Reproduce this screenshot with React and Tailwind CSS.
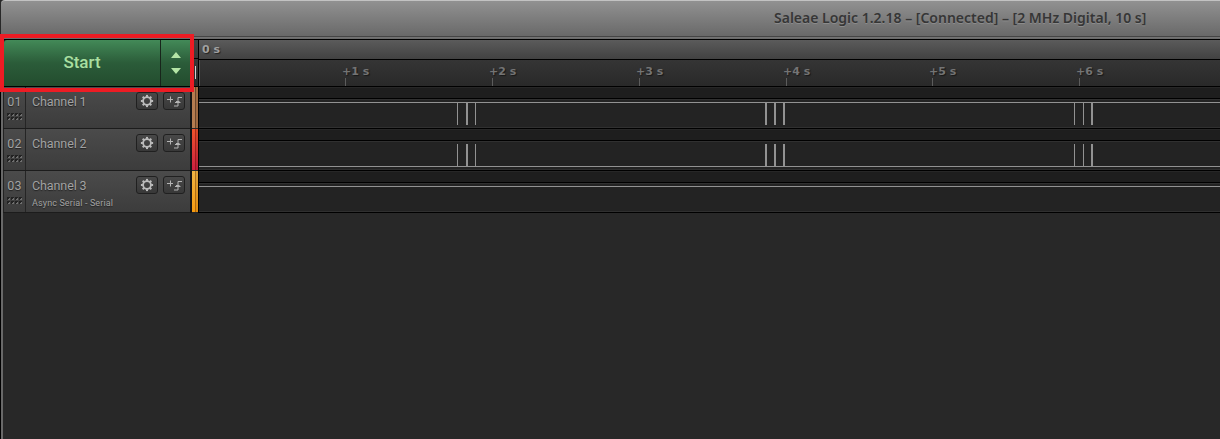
import React from 'react';

const CHANNELS = [
  { id: '01', name: 'Channel 1', stripe: 'bg-[linear-gradient(90deg,#b57c50_0_3px,#6b472c_3px_4px,#a06b42_4px)]', high: true, pulses: true },
  { id: '02', name: 'Channel 2', stripe: 'bg-[linear-gradient(90deg,transparent_3px,rgba(90,0,0,.45)_3px_4px,rgba(60,0,0,.12)_4px),linear-gradient(#f0542c,#cc1f40)]', high: false, pulses: true },
  { id: '03', name: 'Channel 3', note: 'Async Serial - Serial', stripe: 'bg-[linear-gradient(90deg,transparent_3px,rgba(90,40,0,.45)_3px_4px,rgba(60,20,0,.1)_4px),linear-gradient(#f0b544,#f59a10)]', high: true, pulses: false },
];
const PULSES = [[457, 1], [466, 2], [475, 1], [765, 2], [774, 2], [783, 2], [1074, 1], [1083, 1], [1091, 2]];
const TICKS = [345, 492, 639, 786, 932, 1079];

function Grip() {
  const dots = [];
  for (let r = 0; r < 2; r++) for (let c = 0; c < 4; c++) dots.push([c * 4, r * 4]);
  return (
    <svg width="16" height="8" className="block" shapeRendering="crispEdges">
      {dots.map(([x, y]) => (
        <g key={`${x}-${y}`}>
          <rect x={x} y={y} width="3" height="3" fill="#222" />
          <rect x={x + 1} y={y + 1} width="2" height="2" fill="#707070" />
          <rect x={x + 1} y={y + 1} width="1" height="1" fill="#222" />
        </g>
      ))}
    </svg>
  );
}

function Gear() {
  return (
    <svg width="14" height="14" viewBox="-7 -7 14 14">
      <circle r="3.9" fill="none" stroke="#bcbcbc" strokeWidth="1.8" />
      {[0, 45, 90, 135, 180, 225, 270, 315].map((a) => (
        <rect key={a} x="-1" y="-6.1" width="2" height="2" fill="#bcbcbc" transform={`rotate(${a})`} />
      ))}
    </svg>
  );
}

function Trigger() {
  return (
    <svg width="18" height="14" viewBox="0 0 18 14" fill="none" stroke="#b4b4b4" strokeWidth="1">
      <path d="M2 5.5h6M5.5 2.5v6M17 3.5h-4v8.5h-4M10 8.5h5.5M11 7.5h3.5" />
    </svg>
  );
}

function IconButton({ children }) {
  return (
    <button className="flex h-[18px] w-[22px] items-center justify-center rounded-[3px] border border-[#202020] bg-linear-to-b from-[#484848] to-[#383838]">
      {children}
    </button>
  );
}

function Channel({ ch }) {
  return (
    <div className="flex h-[42px]">
      <div className="flex w-[187px] border-b border-[#1c1c1c] bg-linear-to-b from-[#4b4b4b] to-[#3c3c3c] text-[#a2a2a2] [text-shadow:0_1px_1px_#222]">
        <div className="w-px bg-[#222]" />
        <div className="flex w-[22px] flex-col items-center border-r border-[#252525] pt-[7px]">
          <span className="text-[12.5px] leading-[15px] tracking-[0.2px]">{ch.id}</span>
          <div className="mt-[4px]"><Grip /></div>
        </div>
        <div className="flex-1 pt-[7px] pl-[6px]">
          <div className="text-[12.5px] leading-[15px] tracking-[-0.1px] whitespace-nowrap">{ch.name}</div>
          {ch.note && <div className="mt-[5px] text-[9px] leading-[11px] tracking-[0.12px] whitespace-nowrap">{ch.note}</div>}
        </div>
        <div className="flex gap-[5px] pt-[5px] pr-[5px]">
          <IconButton><Gear /></IconButton>
          <IconButton><Trigger /></IconButton>
        </div>
      </div>
      <div className="w-[2px] bg-[#141414]" />
      <div className={`h-[41px] w-[6px] ${ch.stripe}`} />
      <div className="w-px bg-black" />
      <div className="min-w-0 flex-1">
        <div className="h-[11px] border-t border-[#272727] bg-[#1e1e1e]" />
        <div className="h-px bg-black" />
        <div className="h-px bg-[#303030]" />
        <svg width="1021" height="28" className="block bg-[#232323]" shapeRendering="crispEdges" fill="#929292">
          <rect x="0" y={ch.high ? 2 : 24} width="1021" height="1" />
          {ch.pulses && PULSES.map(([x, w]) => (
            <rect key={x} x={x - 199} y={ch.high ? 3 : 2} width={w} height="22" />
          ))}
          <rect x="0" y="27" width="1021" height="1" fill="#303030" />
        </svg>
        <div className="h-px bg-black" />
      </div>
    </div>
  );
}

export default function App() {
  return (
    <div className="relative flex h-[439px] w-[1220px] flex-col overflow-hidden bg-[#282828] font-['Roboto',sans-serif]">
      <header className="ml-px flex h-[39px] rounded-tl-[4px] border-t border-[#c2c2c2] bg-[linear-gradient(#919191,#696969_35px,#454545_35px,#454545_36px,#777_36px,#666)]">
        <h1 className="mt-[7px] ml-[773px] font-['Noto_Sans',sans-serif] text-[14px] leading-[20px] font-semibold whitespace-nowrap text-[#363636] [text-shadow:0_1px_0_#8c8c8c]">
          Saleae Logic 1.2.18 – [Connected] – [2 MHz Digital, 10 s]
        </h1>
      </header>
      <div className="flex flex-1 border-l border-black">
        <div className="w-[2px] bg-[#696969]" />
        <main className="w-[1217px]">
          <div className="flex h-[48px] border-t border-b border-black">
            <div className="flex w-[187px] bg-[#1c1c1c] pl-px text-[#a9dfa0]">
              <button className="w-[156px] rounded-tl-[3px] bg-linear-to-b from-[#438a58] via-[#2b5c39] to-[#234c2e] text-[17px] font-medium">Start</button>
              <div className="w-px bg-[#18251b]" />
              <div className="flex flex-1 items-center justify-center bg-linear-to-b from-[#438a58] via-[#2b5c39] to-[#234c2e]">
                <svg width="10" height="22" viewBox="0 0 10 22" fill="#b4e5a6"><path d="M0 6L5 0L10 6ZM0 16h10L5 22Z" /></svg>
              </div>
            </div>
            <div className="w-[8px] bg-linear-to-b from-[#444] to-[#292929]">
              <div className="h-[18px]" />
              <div className="h-px bg-black" />
              <div className="mt-[7px] ml-[5px] h-[13px] w-px bg-[#d0d0d0]" />
            </div>
            <div className="w-px bg-black" />
            <div className="flex-1 font-['DejaVu_Sans',sans-serif] text-[11px] font-bold">
              <div className="h-[19px] bg-linear-to-b from-[#5b5b5b] to-[#424242] pl-[3px] leading-[19px] text-[#a0a0a0] [text-shadow:1px_1px_1px_#222]">0 s</div>
              <div className="h-px bg-black" />
              <div className="relative h-[26px] border-l border-[#555] bg-linear-to-b from-[#353535] to-[#292929] text-[#747474] [text-shadow:1px_1px_1px_#181818]">
                {TICKS.map((x, i) => (
                  <div key={x} className="absolute top-[5px]" style={{ left: x - 203 }}>
                    <div className="h-[13px] leading-[14px] whitespace-nowrap">+{i + 1} s</div>
                    <div className="ml-[3px] h-[8px] w-px bg-[#5c5c5c]" />
                  </div>
                ))}
              </div>
            </div>
          </div>
          {CHANNELS.map((ch) => <Channel key={ch.id} ch={ch} />)}
        </main>
      </div>
      <div className="pointer-events-none absolute top-[34px] left-0 h-[58px] w-[194px] border-4 border-[#ed1c24]" />
    </div>
  );
}
